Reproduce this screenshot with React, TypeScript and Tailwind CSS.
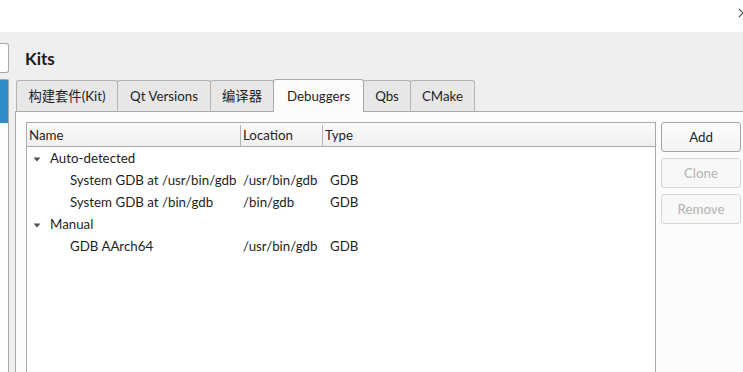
import React from "react";

const font = { fontFamily: "Lato, 'Noto Sans CJK SC', sans-serif" };

function Tab({ label, w, selected }: { label: string; w: number; selected?: boolean }) {
  if (selected) {
    return (
      <div
        className="relative z-10 -mb-px -ml-px flex h-[33px] items-center justify-center rounded-t-[3px] border border-b-0 border-[#a9a9a9] bg-[#fcfcfc] pt-[1px] text-[13.3px] text-[#1e1e1e]"
        style={{ width: w }}
      >
        {label}
      </div>
    );
  }
  return (
    <div
      className="-ml-px flex h-[31px] items-center justify-center rounded-t-[3px] border border-b-0 border-[#b4b4b4] bg-[#e7e7e7] pt-[2px] text-[13.3px] text-[#1e1e1e]"
      style={{ width: w }}
    >
      {label}
    </div>
  );
}

function Arrow() {
  return (
    <svg width="8" height="5" viewBox="0 0 8 5" className="mr-[9px] ml-[6px]">
      <path d="M0.5 0.5 L7.5 0.5 L4 4.5 Z" fill="#505050" />
    </svg>
  );
}

function Row({ name, loc, type, level }: { name: string; loc?: string; type?: string; level: number }) {
  return (
    <div className="flex h-[22px] items-center pt-[2px] text-[13.3px] text-[#1e1e1e]">
      <div className="flex w-[215px] items-center">
        {level === 0 ? (
          <>
            <Arrow />
            <span>{name}</span>
          </>
        ) : (
          <span className="pl-[43px]">{name}</span>
        )}
      </div>
      <div className="w-[85px] pl-[1px]">{loc}</div>
      <div className="pl-[3px]">{type}</div>
    </div>
  );
}

function Btn({ label, disabled }: { label: string; disabled?: boolean }) {
  return (
    <div
      className={
        "flex h-[30px] w-[80px] items-center justify-center rounded-[3px] border pt-[1px] text-[13.3px] " +
        (disabled
          ? "border-[#d6d6d6] bg-[#f8f8f8] text-[#b3b3b3]"
          : "border-[#a4a4a4] bg-gradient-to-b from-[#fdfdfd] to-[#f3f3f3] text-[#1e1e1e]")
      }
    >
      {label}
    </div>
  );
}

export default function App() {
  return (
    <div className="flex h-[372px] w-[743px] flex-col overflow-hidden bg-white" style={font}>
      <div className="relative h-[32px] shrink-0 bg-white">
        <svg className="absolute left-[738px] top-[8px]" width="10" height="10" viewBox="0 0 10 10">
          <path d="M1 1 L9 9 M9 1 L1 9" stroke="#555" strokeWidth="1.2" />
        </svg>
      </div>
      <div className="flex flex-1 bg-[#efefef]">
        {/* left sidebar fragment */}
        <div className="flex w-[9px] shrink-0 flex-col">
          <div className="mt-[11px] h-[30px] rounded-r-[3px] border border-l-0 border-[#a9a9a9] bg-white" />
          <div className="mt-[6px] flex-1 rounded-tr-[2px] border border-b-0 border-l-0 border-[#a9a9a9] bg-white">
            <div className="h-[43px] bg-[#308cc6]" />
          </div>
        </div>
        <div className="w-[6px] shrink-0" />
        {/* main */}
        <div className="flex flex-1 flex-col">
          <div className="flex h-[47px] items-center pl-[10px] pt-[7px] text-[17px] font-bold text-[#1a1a1a]">
            Kits
          </div>
          <div className="flex items-end pl-[2px]">
            <Tab label="构建套件(Kit)" w={102} />
            <Tab label="Qt Versions" w={94} />
            <Tab label="编译器" w={64} />
            <Tab label="Debuggers" w={91} selected />
            <Tab label="Qbs" w={48} />
            <Tab label="CMake" w={65} />
          </div>
          <div className="flex flex-1 gap-[5px] border-l border-t border-[#a9a9a9] bg-[#fcfcfc] pl-[10px] pt-[10px]">
            <div className="flex w-[630px] flex-col border border-b-0 border-[#a9a9a9] bg-white">
              <div className="flex h-[24px] border-b border-[#a9a9a9] bg-gradient-to-b from-[#fafafa] to-[#f0f0f0] pt-[2px] text-[13.3px] text-[#1e1e1e]">
                <div className="flex w-[214px] items-center border-r border-[#b4b4b4] pl-[2px]">Name</div>
                <div className="flex w-[82px] items-center border-r border-[#b4b4b4] pl-[2px]">Location</div>
                <div className="flex items-center pl-[2px]">Type</div>
              </div>
              <Row name="Auto-detected" level={0} />
              <Row name="System GDB at /usr/bin/gdb" loc="/usr/bin/gdb" type="GDB" level={1} />
              <Row name="System GDB at /bin/gdb" loc="/bin/gdb" type="GDB" level={1} />
              <Row name="Manual" level={0} />
              <Row name="GDB AArch64" loc="/usr/bin/gdb" type="GDB" level={1} />
            </div>
            <div className="flex flex-col gap-[6px]">
              <Btn label="Add" />
              <Btn label="Clone" disabled />
              <Btn label="Remove" disabled />
            </div>
          </div>
        </div>
      </div>
    </div>
  );
}
